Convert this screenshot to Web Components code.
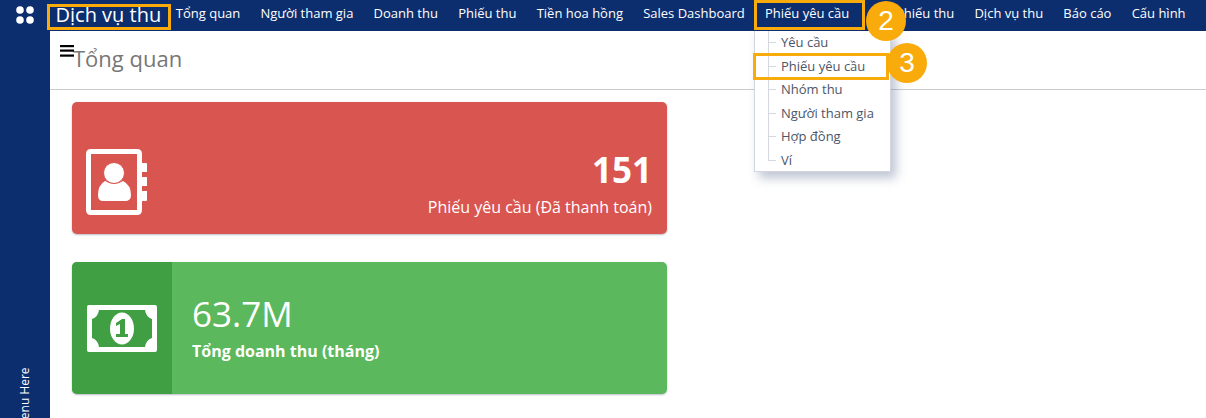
<!DOCTYPE html>
<html lang="vi"><head><meta charset="utf-8"><title>Tổng quan</title>
<style>html,body{margin:0;height:100%;overflow:hidden;background:#fff;font-family:"Open Sans",sans-serif}</style></head>
<body>
<app-shell>
  <top-bar slot="top">
    <nav-link>Tổng quan</nav-link><nav-link>Người tham gia</nav-link><nav-link>Doanh thu</nav-link><nav-link>Phiếu thu</nav-link><nav-link>Tiền hoa hồng</nav-link><nav-link>Sales Dashboard</nav-link><nav-link style="margin-right:26.500px">Phiếu yêu cầu</nav-link><nav-link>Phiếu thu</nav-link><nav-link>Dịch vụ thu</nav-link><nav-link>Báo cáo</nav-link><nav-link>Cấu hình</nav-link>
  </top-bar>
  <side-rail slot="side"></side-rail>
  <page-head slot="head">Tổng quan</page-head>
  <stat-card tone="red">
    <svg slot="icon" width="64" height="66" viewBox="0 0 64 66"><path fill="#fff" fill-rule="evenodd" d="M5 0H51Q56 0 56 5V61Q56 66 51 66H5Q0 66 0 61V5Q0 0 5 0ZM5 5V61H51V5Z"/><path fill="#fff" d="M56 14H60Q61 14 61 15V23H56ZM56 28H61V37H56ZM56 42H61V51Q61 52 60 52H56Z"/><path fill="#fff" d="M19 32Q28 38 37 32Q45 36 45 46Q45 52 39 52H17Q12 52 12 46Q12 36 19 32Z"/><circle cx="28" cy="24" r="10.500" fill="#fff" stroke="#d95550" stroke-width="1"/></svg>
    <b slot="value">151</b><span slot="label">Phiếu yêu cầu (Đã thanh toán)</span>
  </stat-card>
  <stat-card tone="green">
    <svg slot="icon" width="70" height="47" viewBox="0 0 70 47"><path fill="#fff" d="M2 0H68Q70 0 70 2V45Q70 47 68 47H2Q0 47 0 45V2Q0 0 2 0Z"/><path fill="#419f43" d="M12 5H58Q59 12 65 14V33Q59 35 58 42H12Q11 35 5 33V14Q11 12 12 5Z"/><ellipse cx="35" cy="23.500" rx="12" ry="16" fill="#fff"/><path fill="#419f43" d="M29 18L35 14H38V29H41V32H29V29H33V19L29 21Z"/></svg>
    <span slot="value">63.7M</span><b slot="label">Tổng doanh thu (tháng)</b>
  </stat-card>
  <drop-menu slot="over"><menu-row>Yêu cầu</menu-row><menu-row>Phiếu yêu cầu</menu-row><menu-row>Nhóm thu</menu-row><menu-row>Người tham gia</menu-row><menu-row>Hợp đồng</menu-row><menu-row last>Ví</menu-row></drop-menu>
  <mark-box slot="over" style="left:47px;top:4px;width:124px;height:26px"></mark-box>
  <mark-box slot="over" style="left:754px;top:0;width:111px;height:30px"></mark-box>
  <mark-box slot="over" style="left:753px;top:53px;width:136px;height:27px"></mark-box>
  <step-badge slot="over" style="left:866px;top:1px">2</step-badge>
  <step-badge slot="over" style="left:887px;top:43px">3</step-badge>
</app-shell>
<script>
const def=(n,html)=>customElements.define(n,class extends HTMLElement{constructor(){super();this.attachShadow({mode:'open'}).innerHTML=html;}});
def('app-shell',`<style>:host{display:grid;grid-template:31px 1fr/50px 1fr;width:1206px;height:418px;position:relative;overflow:hidden}
.t{grid-column:1/3}.m{display:flex;flex-direction:column;min-width:0}
.c{display:flex;flex-direction:column;gap:28px;padding:12px 0 0 22px}</style>
<div class="t"><slot name="top"></slot></div><slot name="side"></slot>
<div class="m"><slot name="head"></slot><div class="c"><slot></slot></div></div><slot name="over"></slot>`);
def('top-bar',`<style>:host{display:flex;align-items:center;height:31px;background:#0c2e6e;color:#fff}
svg{margin-left:16px;flex:none;position:relative;top:-1px}.b{font-size:20px;margin-left:21.500px;width:120.300px;white-space:nowrap;position:relative;top:-1px}
nav{display:flex;gap:20.200px;font-size:13px;position:relative;top:-3px}</style>
<svg width="18" height="18" viewBox="0 0 18 18" fill="#fff"><circle cx="4" cy="4" r="3.800"/><circle cx="14" cy="4" r="3.800"/><circle cx="4" cy="14" r="3.800"/><circle cx="14" cy="14" r="3.800"/></svg>
<span class="b">Dịch vụ thu</span><nav><slot></slot></nav>`);
def('nav-link',`<style>:host{display:block;white-space:nowrap}</style><slot></slot>`);
def('side-rail',`<style>:host{display:flex;justify-content:center;align-items:flex-start;background:#0c2e6e;color:#fff;overflow:hidden;padding-top:337px;box-sizing:border-box;height:387px}
span{writing-mode:vertical-rl;transform:rotate(180deg);font-size:12px;white-space:nowrap;line-height:16px;height:62px;text-align:left}</style><span>Menu Here</span>`);
def('page-head',`<style>:host{display:flex;align-items:center;height:59px;box-sizing:border-box;border-bottom:1px solid #ccc;padding:0 0 5px 23px;font-size:22px;color:#777;position:relative}
svg{position:absolute;left:10px;top:14px}</style>
<svg width="14" height="13" viewBox="0 0 14 13" fill="#000"><rect y="0" width="14" height="2.200"/><rect y="4.500" width="14" height="2.200"/><rect y="9.500" width="14" height="2.200"/></svg><slot></slot>`);
customElements.define('stat-card',class extends HTMLElement{constructor(){super();const red=this.getAttribute('tone')==='red';
this.attachShadow({mode:'open'}).innerHTML=`<style>:host{display:flex;width:595px;height:132px;border-radius:5px;overflow:hidden;color:#fff;box-shadow:0 1px 2px rgba(60,70,90,.35);background:${red?'#d95550':'#5cb85c'}}
.i{width:${red?'auto':'100px'};background:${red?'none':'#419f43'};display:flex;align-items:${red?'flex-start':'center'};justify-content:${red?'flex-start':'center'};padding:${red?'47px 0 0 14px':'0'};box-sizing:border-box;flex:none}
.i ::slotted(svg){display:block}
.t{flex:1;display:flex;flex-direction:column;${red?'align-items:flex-end;padding:44px 15px 0 0':'padding:28px 0 0 20px'}}
.v{font-size:35px;line-height:48px;}.l{font-size:16px;line-height:22px;margin-top:2px}
.v ::slotted(b),.l ::slotted(b){font-weight:700}</style>
<div class="i"><slot name="icon"></slot></div><div class="t"><div class="v"><slot name="value"></slot></div><div class="l"><slot name="label"></slot></div></div>`;}});
def('drop-menu',`<style>:host{position:absolute;left:754px;top:31px;width:137px;height:141px;box-sizing:border-box;background:#fff;border:1px solid #d3d6de;border-top:0;box-shadow:5px 6px 10px rgba(70,85,130,.35);color:#4d5568;font-size:13px}</style><slot></slot>`);
customElements.define('menu-row',class extends HTMLElement{constructor(){super();const last=this.hasAttribute('last');
this.attachShadow({mode:'open'}).innerHTML=`<style>:host{display:block;height:23.500px;line-height:23px;padding-left:26px;position:relative;white-space:nowrap}
:host::before{content:"";position:absolute;left:13px;top:0;height:${last?'12px':'100%'};border-left:1px solid #d5d8de}
:host::after{content:"";position:absolute;left:13px;top:11px;width:8px;border-top:1px solid #d5d8de}</style><slot></slot>`;}});
def('mark-box',`<style>:host{position:absolute;box-sizing:border-box;border:3px solid #f9ab0b}</style>`);
def('step-badge',`<style>:host{position:absolute;width:40px;height:40px;border-radius:50%;background:#f9ab0b;color:#fff;font:28px/40px "Liberation Sans",sans-serif;text-align:center}</style><slot></slot>`);
</script>
</body></html>
